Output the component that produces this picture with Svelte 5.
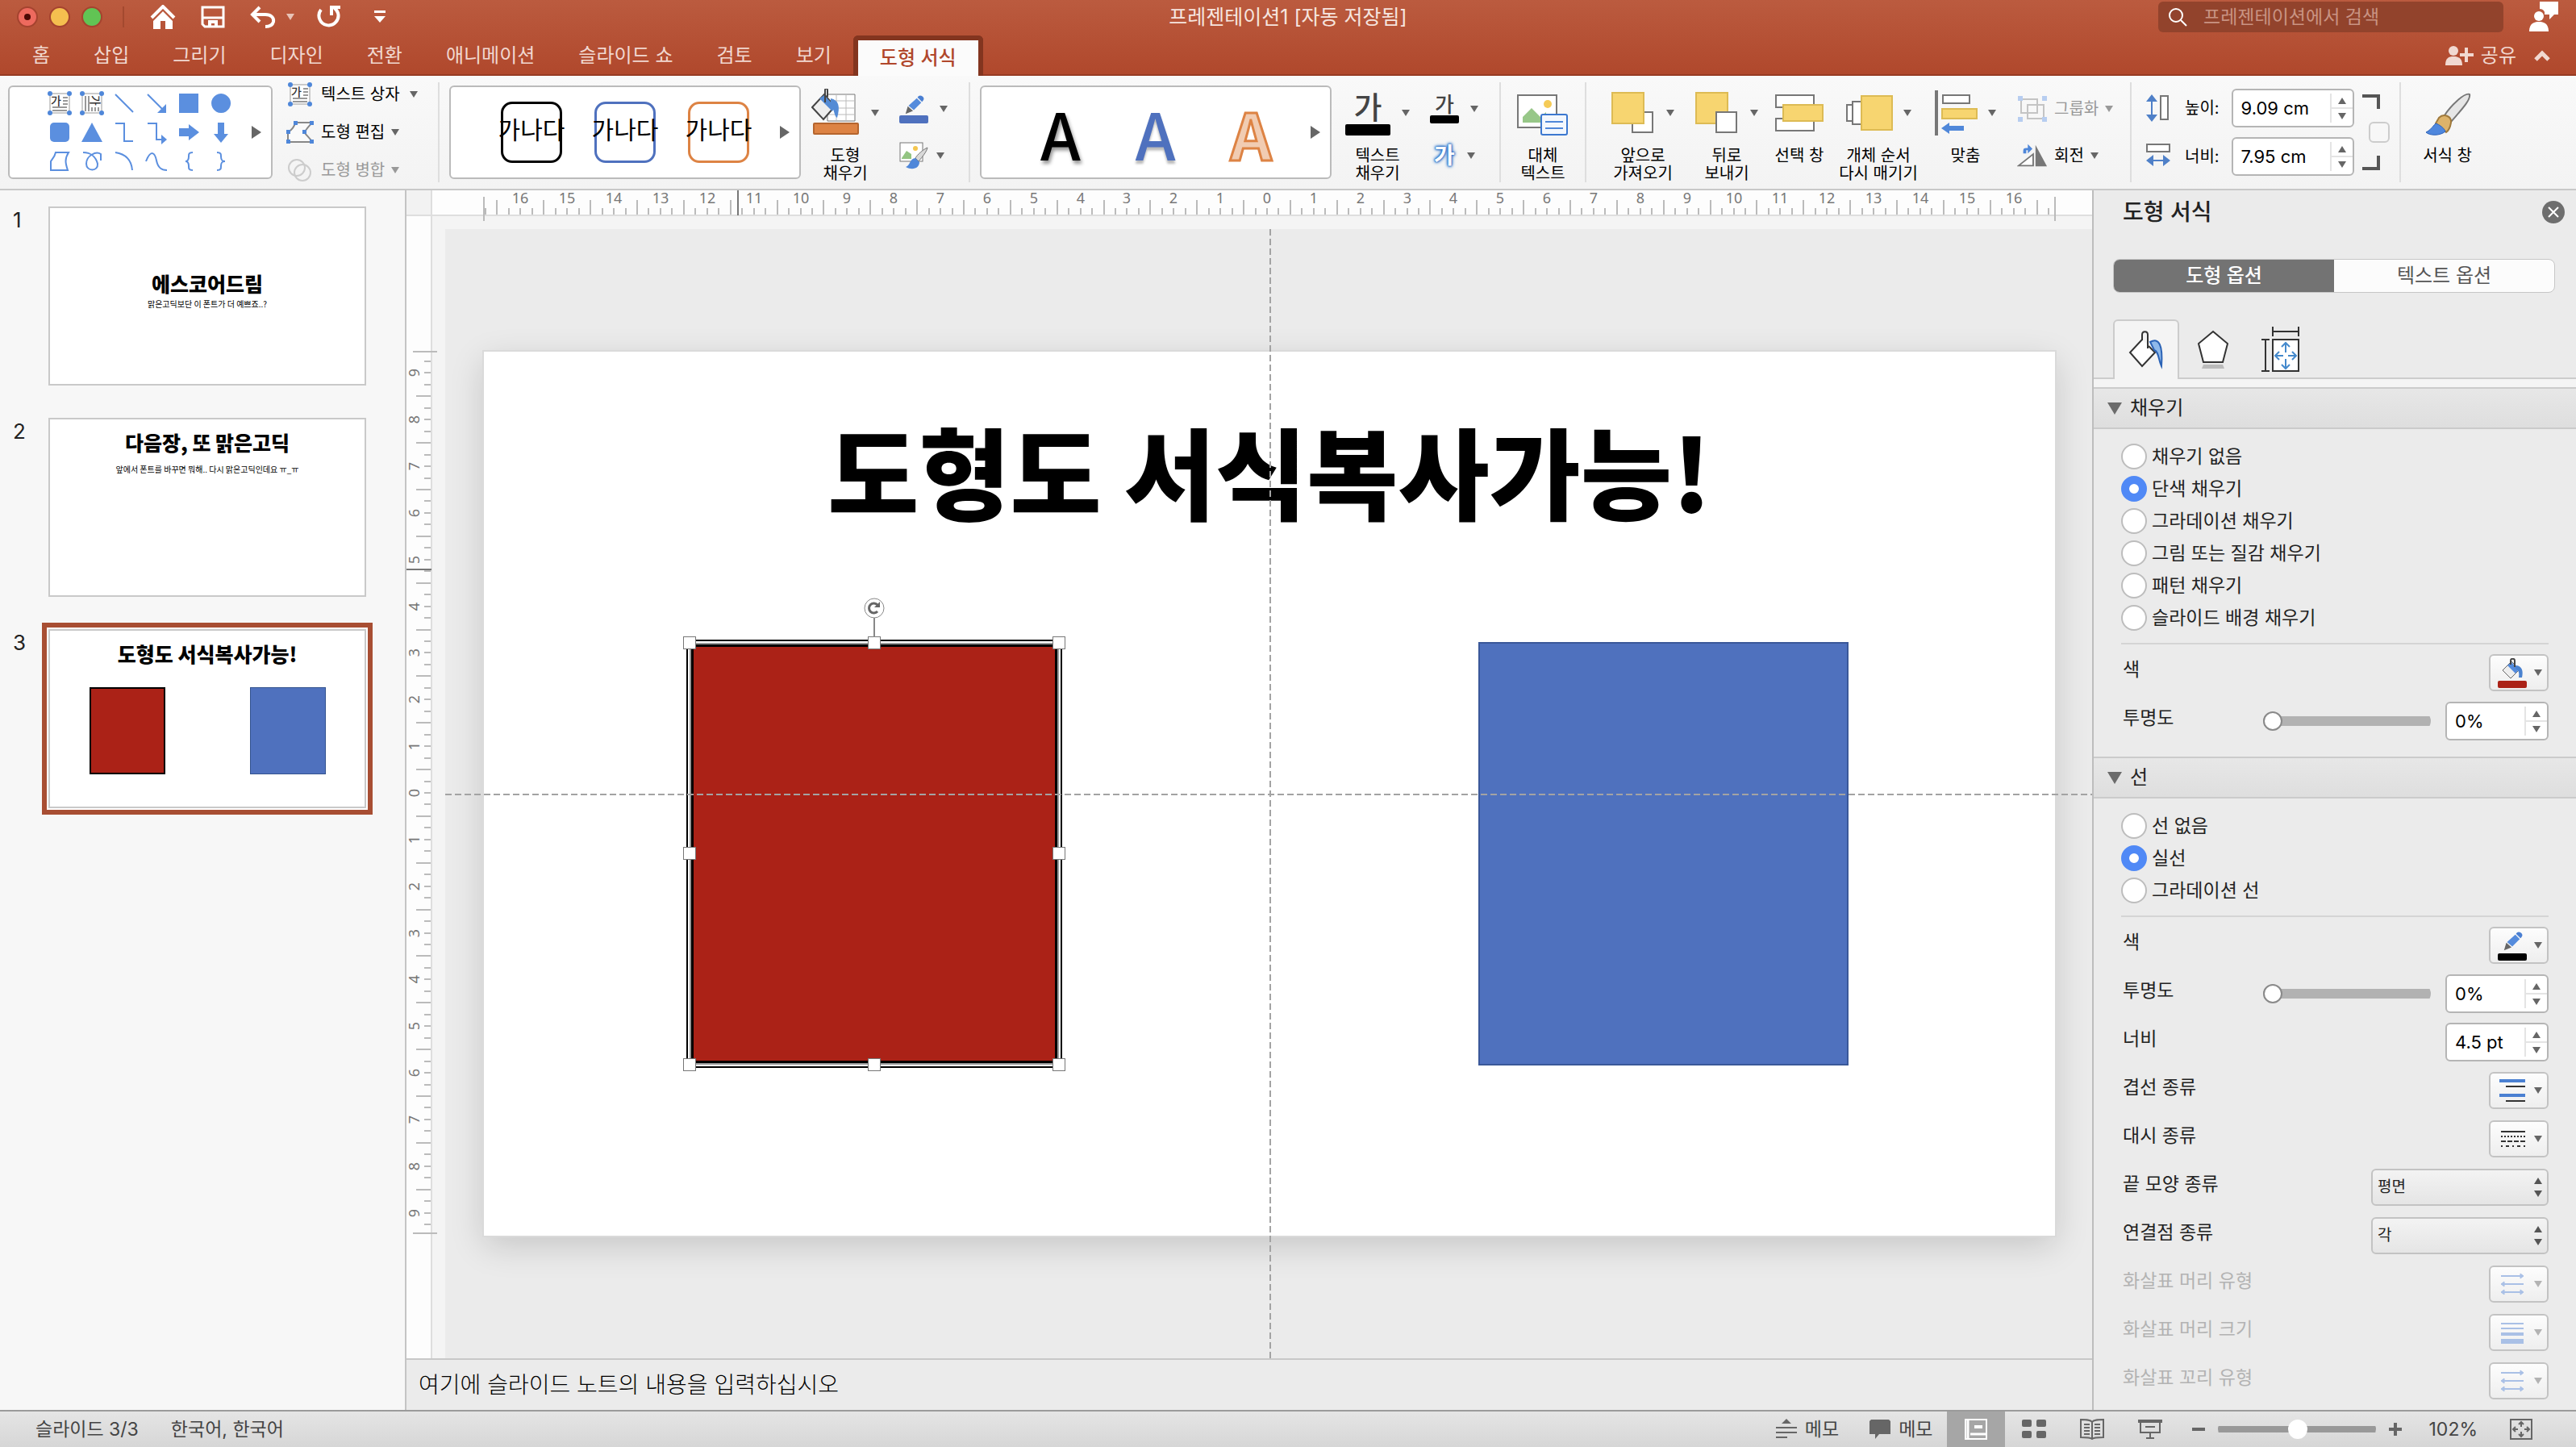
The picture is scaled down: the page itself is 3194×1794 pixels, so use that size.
<script>
    let fill = '단색 채우기';
    let line = '실선';
    let fillAlpha = 0;
    let lineAlpha = 0;
    let zoom = 51;

    const tabs = ['홈', '삽입', '그리기', '디자인', '전환', '애니메이션', '슬라이드 쇼', '검토', '보기', '도형 서식'];
    const fills = ['채우기 없음', '단색 채우기', '그라데이션 채우기', '그림 또는 질감 채우기', '패턴 채우기', '슬라이드 배경 채우기'];
    const lines = ['선 없음', '실선', '그라데이션 선'];

    // f: filled shape, s: stroked shape, both on a 30x30 box
    const shapes = [
        {name: '텍스트 상자', box: 'h'},
        {name: '세로 텍스트 상자', box: 'v'},
        {name: '선', s: 'M4 4L26 26'},
        {name: '화살표', s: 'M4 4L24 24', f: 'M27 27V16L16 27z'},
        {name: '직사각형', f: 'M3 3H27V27H3z'},
        {name: '타원', f: 'M15 3a12 12 0 1 0 .1 0z'},
        {name: '둥근 직사각형', f: 'M8 3H22a5 5 0 0 1 5 5V22a5 5 0 0 1-5 5H8a5 5 0 0 1-5-5V8a5 5 0 0 1 5-5z'},
        {name: '삼각형', f: 'M15 3L28 27H2z'},
        {name: '꺾인 연결선', s: 'M4 4H15V26H26'},
        {name: '꺾인 화살표', s: 'M4 4H15V24H23', f: 'M21 18L28 24L21 30z'},
        {name: '오른쪽 화살표', f: 'M3 10H15V5L28 15L15 25V20H3z'},
        {name: '아래쪽 화살표', f: 'M11 3H19V17H24L15 28L6 17H11z'},
        {name: '자유형', s: 'M10 4H26C21 12 22 17 25 26H4V15C6 12 9 9 10 4z'},
        {name: '자유 곡선', s: 'M4 4C14 4 20 10 22 18C23 28 8 28 8 18C8 8 20 2 26 6V14'},
        {name: '원호', s: 'M4 4C17 6 24 14 25 26'},
        {name: '곡선', s: 'M2 15C8 0 13 4 15 14C17 24 22 26 28 26'},
        {name: '왼쪽 중괄호', s: 'M20 4C15 4 15 6 15 9C15 13 14 15 11 15C14 15 15 17 15 21C15 24 15 26 20 26'},
        {name: '오른쪽 중괄호', s: 'M10 4C15 4 15 6 15 9C15 13 16 15 20 15C16 15 15 17 15 21C15 24 15 26 10 26'}
    ];

    // slide objects, in centimetres
    const page = {w: 33.87, h: 19.05};
    const objects = [
        {color: 'red', x: 4.44, y: 6.27, w: 7.95, h: 9.09, selected: true},
        {color: 'blue', x: 21.46, y: 6.27, w: 7.95, h: 9.09}
    ];
    const place = (o) =>
        `left: ${o.x / page.w * 100}%; top: ${o.y / page.h * 100}%; width: ${o.w / page.w * 100}%; height: ${o.h / page.h * 100}%`;

    const step = 57.85;
    const range = (n) => Array.from({length: 2 * n + 1}, (_, i) => i - n);
    const isHalf = (k) => Math.abs(k) % 4 === 2;
    const handles = ['nw', 'n', 'ne', 'w', 'e', 'sw', 's', 'se'];
</script>

{#snippet caret()}
    <svg class="caret" viewBox="0 0 10 8" width="10" height="8"><path d="M0 0H10L5 8z" fill="currentColor"/></svg>
{/snippet}

{#snippet more()}
    <button class="more" aria-label="더 보기">
        <svg viewBox="0 0 12 16" width="12" height="16"><path d="M0 0L12 8L0 16z" fill="#666"/></svg>
    </button>
{/snippet}

{#snippet textBox(dir)}
    <svg viewBox="0 0 30 30" width="30" height="30">
        <rect x="3" y="3" width="24" height="24" fill="#fff" stroke="#999"/>
        {#if dir === 'h'}
            <text x="4" y="17" font-size="14" font-weight="500" fill="#333">가</text>
            <path d="M19 8H25M19 12H25M19 16H25M6 20H24M6 24H24" stroke="#999" stroke-width="2"/>
        {:else}
            <text font-size="14" font-weight="500" fill="#333" transform="translate(14 5) rotate(90)">가</text>
            <path d="M7 6V25M11 6V25M15 20V25M19 20V25M23 20V25" stroke="#999" stroke-width="2"/>
        {/if}
        {#each [3, 27] as x}
            {#each [3, 27] as y}
                <circle cx={x} cy={y} r="3" fill="#4f87d9"/>
            {/each}
        {/each}
    </svg>
{/snippet}

{#snippet pen(size)}
    <svg viewBox="0 0 28 26" width={size} height={size}>
        <path d="M3 25L6 15L13 21z" fill="#666"/>
        <path d="M7 14L18 4L24 10L14 20z" fill="#548bdc"/>
        <path d="M19 3C21 0 23 0 26 2C28 4 28 6 25 9z" fill="#4a7fd2"/>
    </svg>
{/snippet}

{#snippet spin(value, label)}
    <span class="spin">
        <input type="text" aria-label={label} {value}>
        <span class="steps">
            <button aria-label="{label} 늘리기"><svg viewBox="0 0 10 8" width="10" height="8"><path d="M0 8H10L5 0z" fill="#666"/></svg></button>
            <button aria-label="{label} 줄이기"><svg viewBox="0 0 10 8" width="10" height="8"><path d="M0 0H10L5 8z" fill="#666"/></svg></button>
        </span>
    </span>
{/snippet}

{#snippet updown()}
    <svg class="updown" viewBox="0 0 10 24" width="10" height="24"><path d="M0 8H10L5 0zM0 16H10L5 24z" fill="#555"/></svg>
{/snippet}

{#snippet arrows()}
    <svg viewBox="0 0 36 30" width="36" height="30" stroke="#a9c0e6" fill="#a9c0e6" stroke-width="2">
        <path d="M4 5H28M8 15H32M8 25H28"/>
        <path d="M28 2L32 5L28 8zM8 12L4 15L8 18zM8 22L4 25L8 28zM28 22L32 25L28 28z" stroke-width="1"/>
    </svg>
{/snippet}

<div class="app">
    <header>
        <div class="titlebar">
            <div class="side">
                <div class="lights">
                    <button class="light close" aria-label="닫기"><i></i></button>
                    <button class="light min" aria-label="최소화"></button>
                    <button class="light max" aria-label="최대화"></button>
                </div>
                <div class="quick">
                    <button aria-label="홈">
                        <svg viewBox="0 0 32 30" width="32" height="30">
                            <path d="M2 16L16 2L30 16" fill="none" stroke="#fff" stroke-width="4"/>
                            <path d="M4 20L16 8L28 20V30H19V20H13V30H4z" fill="#fff"/>
                        </svg>
                    </button>
                    <button aria-label="저장">
                        <svg viewBox="0 0 30 28" width="30" height="28" fill="none" stroke="#fff">
                            <path d="M2 2H28V26H5L2 23z" stroke-width="3"/>
                            <path d="M3 15H27" stroke-width="3"/>
                            <path d="M9 18H21V27H17V22H13V27H9z" fill="#fff" stroke="none"/>
                        </svg>
                    </button>
                    <button class="undo" aria-label="실행 취소">
                        <svg viewBox="0 0 32 28" width="32" height="28" fill="none" stroke="#fff" stroke-width="4">
                            <path d="M12 2L3 11L12 20"/>
                            <path d="M4 11H19C26 11 30 15 29 20C28 24 24 26 19 26"/>
                        </svg>
                        {@render caret()}
                    </button>
                    <button class="redo" aria-label="다시 실행">
                        <svg viewBox="0 0 32 30" width="32" height="30" fill="none" stroke="#fff" stroke-width="4">
                            <path d="M6 6A12 12 0 1 0 27 10C26 7 24 5 22 3"/>
                            <path d="M19 13V3H30"/>
                        </svg>
                    </button>
                    <button class="custom" aria-label="사용자 지정">
                        <svg viewBox="0 0 16 16" width="16" height="16" fill="#fff"><path d="M1 0H15V3H1zM1 7H15L8 15z"/></svg>
                    </button>
                </div>
            </div>
            <h1>프레젠테이션1 [자동 저장됨]</h1>
            <div class="side right">
                <label class="search">
                    <svg viewBox="0 0 24 24" width="24" height="24" fill="none" stroke="#fff" stroke-width="2">
                        <circle cx="10" cy="10" r="8"/><path d="M16 16L23 23"/>
                    </svg>
                    <input type="text" aria-label="검색" placeholder="프레젠테이션에서 검색">
                </label>
                <button class="me" aria-label="계정">
                    <svg viewBox="0 0 36 38" width="36" height="38" fill="#fff">
                        <path d="M13 0H36V16H31L25 22V16H19C20 12 17 9 13 9z"/>
                        <circle cx="12" cy="18" r="6"/>
                        <path d="M0 37C0 27 6 25 12 25S24 27 24 37z"/>
                    </svg>
                </button>
            </div>
        </div>
        <nav>
            {#each tabs as tab, i}
                <button class="tab" class:on={i === tabs.length - 1}>{tab}</button>
            {/each}
            <button class="share">
                <svg viewBox="0 0 36 26" width="36" height="26" fill="#f1d8d0">
                    <circle cx="10" cy="7" r="6"/>
                    <path d="M0 25C0 16 4 14 10 14S21 16 21 25z"/>
                    <path d="M24 3H28V10H35V14H28V21H24V14H18V10H24z"/>
                </svg>
                공유
            </button>
            <button class="fold" aria-label="리본 접기">
                <svg viewBox="0 0 20 14" width="20" height="14" fill="none" stroke="#f1d8d0" stroke-width="5"><path d="M2 12L10 4L18 12"/></svg>
            </button>
        </nav>
    </header>

    <div class="ribbon">
        <div class="gallery first">
            <div class="shapes">
                {#each shapes as s}
                    <button aria-label={s.name}>
                        {#if s.box}
                            {@render textBox(s.box)}
                        {:else}
                            <svg viewBox="0 0 30 30" width="30" height="30">
                                {#if s.s}<path d={s.s} fill="none" stroke="#5b8fdf" stroke-width="2"/>{/if}
                                {#if s.f}<path d={s.f} fill="#5b8fdf"/>{/if}
                            </svg>
                        {/if}
                    </button>
                {/each}
            </div>
            {@render more()}
        </div>

        <div class="stack">
            <button>
                {@render textBox('h')}
                텍스트 상자 <span class="wide">{@render caret()}</span>
            </button>
            <button>
                <svg viewBox="0 0 36 30" width="36" height="30">
                    <path d="M12 3H33C28 9 24 12 24 16C27 20 31 23 33 27H3V15C8 12 11 8 12 3z" fill="#fafafa" stroke="#888" stroke-width="2"/>
                    <path d="M10 1h5v5h-5zM30 1h5v5h-5zM1 12h5v5h-5zM21 12h5v5h-5zM1 24h5v5h-5zM30 24h5v5h-5z" fill="#4f87d9"/>
                </svg>
                도형 편집 {@render caret()}
            </button>
            <button class="dim" disabled>
                <svg viewBox="0 0 36 30" width="36" height="30" fill="none" stroke="#ccc" stroke-width="2">
                    <circle cx="14" cy="12" r="10"/><circle cx="21" cy="18" r="10"/>
                </svg>
                도형 병합 {@render caret()}
            </button>
        </div>
        <span class="rule"></span>

        <div class="gallery">
            <div class="themes">
                <button class="black"><span>가나다</span></button>
                <button class="blue"><span>가나다</span></button>
                <button class="orange"><span>가나다</span></button>
            </div>
            {@render more()}
        </div>

        <button class="big fillbtn">
            <span class="icon">
                <svg viewBox="0 0 60 60" width="60" height="60">
                    <path d="M20 7H54V40H20z" fill="#fff" stroke="#777"/>
                    <path d="M31 7V40M43 7V40M20 15H54M20 24H54M20 32H54" stroke="#bbb"/>
                    <path d="M16 7L29 22L15 38L1 23z" fill="#eee" stroke="#444" stroke-width="2"/>
                    <path d="M10 12L26 28L29 22L16 8z" fill="#548bd5"/>
                    <path d="M24 12C34 14 36 22 32 36C28 34 29 26 24 20z" fill="#548bd5"/>
                    <path d="M17 17V2C17-1 20-1 20 2V10" fill="none" stroke="#444" stroke-width="2"/>
                    <rect x="3" y="43" width="55" height="13" rx="1" fill="#dd8344" stroke="#b5652e" stroke-width="2"/>
                </svg>
                {@render caret()}
            </span>
            도형<br>채우기
        </button>
        <div class="pair">
            <button class="ink">
                <span>{@render pen(26)}<i class="swatch blue"></i></span>
                {@render caret()}
            </button>
            <button>
                <svg viewBox="0 0 36 34" width="36" height="34">
                    <rect x="1" y="1" width="28" height="23" fill="#fff" stroke="#777"/>
                    <path d="M3 20L9 11L15 15V21H3z" fill="#93c482"/>
                    <circle cx="20" cy="8" r="3" fill="#f4c64f"/>
                    <path d="M35 7C30 9 22 16 20 20L24 24C29 18 34 12 35 7z" fill="#d9d9d9" stroke="#777"/>
                    <path d="M20 20C13 20 14 29 8 31C17 36 25 32 25 25z" fill="#4f87d9"/>
                </svg>
                {@render caret()}
            </button>
        </div>
        <span class="rule"></span>

        <div class="gallery">
            <div class="arts">
                <button class="a1">A</button>
                <button class="a2">A</button>
                <button class="a3">A</button>
            </div>
            {@render more()}
        </div>

        <button class="big textbtn">
            <span class="icon">
                <span class="glyph"><b>가</b><i></i></span>
                {@render caret()}
            </span>
            텍스트<br>채우기
        </button>
        <div class="pair second">
            <button class="ink">
                <span><b>가</b><i class="swatch"></i></span>
                {@render caret()}
            </button>
            <button><b class="glow">가</b>{@render caret()}</button>
        </div>
        <span class="rule"></span>

        <button class="big alt">
            <span class="icon">
                <svg viewBox="0 0 64 56" width="64" height="56">
                    <rect x="1" y="6" width="48" height="40" fill="#fff" stroke="#777" stroke-width="2"/>
                    <path d="M7 40V33L18 22L29 33L36 27V40z" fill="#97c788"/>
                    <circle cx="38" cy="17" r="5" fill="#f5cb57"/>
                    <rect x="30" y="30" width="32" height="25" rx="2" fill="#f3f7fd" stroke="#3c78d0" stroke-width="2"/>
                    <path d="M35 39H57M35 47H57" stroke="#4f87d9" stroke-width="2"/>
                </svg>
            </span>
            대체<br>텍스트
        </button>
        <span class="rule"></span>

        <button class="big front">
            <span class="icon">
                <svg viewBox="0 0 54 56" width="54" height="56">
                    <rect x="26" y="27" width="25" height="25" fill="#fff" stroke="#777" stroke-width="2"/>
                    <rect x="1" y="3" width="39" height="38" fill="#f7d570" stroke="#ddbb54" stroke-width="2"/>
                </svg>
                {@render caret()}
            </span>
            앞으로<br>가져오기
        </button>
        <button class="big back">
            <span class="icon">
                <svg viewBox="0 0 54 56" width="54" height="56">
                    <rect x="1" y="3" width="39" height="38" fill="#f7d570" stroke="#ddbb54" stroke-width="2"/>
                    <rect x="26" y="27" width="25" height="25" fill="#fff" stroke="#777" stroke-width="2"/>
                </svg>
                {@render caret()}
            </span>
            뒤로<br>보내기
        </button>
        <button class="big pane">
            <span class="icon">
                <svg viewBox="0 0 60 56" width="60" height="56">
                    <rect x="1" y="6" width="47" height="15" fill="#fff" stroke="#777" stroke-width="2"/>
                    <rect x="1" y="35" width="47" height="15" fill="#fff" stroke="#777" stroke-width="2"/>
                    <rect x="10" y="18" width="49" height="20" fill="#f7d570" stroke="#ddbb54" stroke-width="2"/>
                </svg>
            </span>
            선택 창
        </button>
        <button class="big order">
            <span class="icon">
                <svg viewBox="0 0 60 56" width="60" height="56">
                    <rect x="2" y="18" width="14" height="20" fill="#fff" stroke="#777" stroke-width="2"/>
                    <rect x="9" y="14" width="18" height="28" fill="#fff" stroke="#777" stroke-width="2"/>
                    <rect x="20" y="7" width="38" height="42" fill="#f7d570" stroke="#ddbb54" stroke-width="2"/>
                </svg>
                {@render caret()}
            </span>
            개체 순서<br>다시 매기기
        </button>
        <button class="big align">
            <span class="icon">
                <svg viewBox="0 0 54 56" width="54" height="56">
                    <path d="M0 0H4V56H0z" fill="#777"/>
                    <rect x="10" y="6" width="33" height="10" fill="#fff" stroke="#777" stroke-width="2"/>
                    <rect x="9" y="23" width="43" height="12" fill="#f7d570" stroke="#ddbb54" stroke-width="2"/>
                    <path d="M8 47L18 40V44H36V50H18V54z" fill="#4f87d9"/>
                </svg>
                {@render caret()}
            </span>
            맞춤
        </button>
        <div class="pair rows">
            <button class="dim" disabled>
                <svg viewBox="0 0 38 34" width="38" height="34">
                    <path d="M5 5H25V22H5zM13 12H33V29H13z" fill="none" stroke="#c4c4c4" stroke-width="2"/>
                    <path d="M1 1h6v6h-6zM31 1h6v6h-6zM1 27h6v6h-6zM31 27h6v6h-6z" fill="#b7cdf0"/>
                </svg>
                그룹화 {@render caret()}
            </button>
            <button>
                <svg viewBox="0 0 40 30" width="40" height="30">
                    <path d="M2 28H21V13z" fill="#fff" stroke="#777" stroke-width="2"/>
                    <path d="M24 1V29H39z" fill="#777"/>
                    <path d="M8 12V9C8 6 9 5 12 5H14V0L20 6L14 12V8H12V12z" fill="#4f87d9"/>
                </svg>
                회전 {@render caret()}
            </button>
        </div>
        <span class="rule"></span>

        <div class="sizes">
            <label>
                <svg viewBox="0 0 30 34" width="30" height="34">
                    <path d="M7 8V26" stroke="#4f80c8" stroke-width="2"/>
                    <path d="M7 0L14 9H0zM7 34L14 25H0z" fill="#4f80c8"/>
                    <rect x="18" y="2" width="9" height="29" fill="#fff" stroke="#777" stroke-width="2"/>
                </svg>
                높이:
                {@render spin('9.09 cm', '높이')}
            </label>
            <label>
                <svg viewBox="0 0 30 34" width="30" height="34">
                    <rect x="1" y="2" width="28" height="9" fill="#fff" stroke="#777" stroke-width="2"/>
                    <path d="M8 22H22" stroke="#4f80c8" stroke-width="2"/>
                    <path d="M0 22L9 15V29zM30 22L21 15V29z" fill="#4f80c8"/>
                </svg>
                너비:
                {@render spin('7.95 cm', '너비')}
            </label>
        </div>
        <div class="ratio">
            <svg viewBox="0 0 24 20" width="24" height="20"><path d="M0 2H20V18" fill="none" stroke="#555" stroke-width="4"/></svg>
            <input type="checkbox" aria-label="가로 세로 비율 고정">
            <svg viewBox="0 0 24 20" width="24" height="20"><path d="M0 18H20V2" fill="none" stroke="#555" stroke-width="4"/></svg>
        </div>
        <span class="rule"></span>

        <button class="big brush">
            <span class="icon">
                <svg viewBox="0 0 58 56" width="58" height="56">
                    <path d="M56 5C50 2 32 20 25 31L33 39C44 26 58 12 56 5z" fill="#e6e6e6" stroke="#777" stroke-width="2"/>
                    <path d="M18 34C24 28 34 32 33 40C32 46 30 50 27 52L14 41z" fill="#ddb36a" stroke="#a07a3c" stroke-width="2"/>
                    <path d="M2 52C8 49 10 45 14 41C18 42 25 47 26 51C19 57 6 56 2 52z" fill="#4f87dd" stroke="#2f63b8"/>
                </svg>
            </span>
            서식 창
        </button>
    </div>

    <main>
        <aside class="slides">
            <ol>
                <li>
                    <span class="num">1</span>
                    <button class="thumb">
                        <span class="page cover">
                            <b>에스코어드림</b>
                            <small>맑은고딕보단 이 폰트가 더 예쁘죠..?</small>
                        </span>
                    </button>
                </li>
                <li>
                    <span class="num">2</span>
                    <button class="thumb">
                        <span class="page">
                            <b>다음장, 또 맑은고딕</b>
                            <small class="low">앞에서 폰트를 바꾸면 뭐해.. 다시 맑은고딕인데요 ㅠ_ㅠ</small>
                        </span>
                    </button>
                </li>
                <li>
                    <span class="num">3</span>
                    <button class="thumb on">
                        <span class="page">
                            <b>도형도 서식복사가능!</b>
                            <span class="minis"><i class="red"></i><i class="blue"></i></span>
                        </span>
                    </button>
                </li>
            </ol>
        </aside>

        <section class="editor">
            <div class="corner"></div>
            <svg class="ruler top" height="32">
                <g transform="translate(1035 0)">
                    {#each range(67) as k}
                        <path d="M{Math.round(k * step / 4)} {isHalf(k) ? 12 : 22}V30" stroke="#bbb" stroke-width="2"/>
                    {/each}
                    {#each range(16) as n}
                        <text x={Math.round(n * step)} y="16">{Math.abs(n)}</text>
                    {/each}
                    <path d="M-971 8V38M977 8V38" stroke="#bbb" stroke-width="2"/>
                    <path d="M-656 0V31" stroke="#777" stroke-width="2"/>
                </g>
            </svg>
            <svg class="ruler left" width="32">
                <g transform="translate(0 715)">
                    {#each range(37) as k}
                        <path d="M{isHalf(k) ? 12 : 22} {Math.round(k * step / 4)}H30" stroke="#bbb" stroke-width="2"/>
                    {/each}
                    {#each range(9) as n}
                        <text transform="translate(16 {Math.round(n * step)}) rotate(-90)">{Math.abs(n)}</text>
                    {/each}
                    <path d="M8-547H38M8 546H38" stroke="#bbb" stroke-width="2"/>
                    <path d="M0-277H31" stroke="#777" stroke-width="2"/>
                </g>
            </svg>
            <div class="canvas">
                <div class="slide">
                    <h2>도형도 서식복사가능!</h2>
                    {#each objects as o}
                        <div class="shape {o.color}" style={place(o)}>
                            {#if o.selected}
                                {#each handles as h}
                                    <i class="handle {h}"></i>
                                {/each}
                                <svg class="turn" viewBox="0 0 28 50" width="28" height="50">
                                    <path d="M14 26V50" stroke="#888" stroke-width="2"/>
                                    <circle cx="14" cy="14" r="12" fill="#fff" stroke="#888"/>
                                    <path d="M18 18A6 6 0 1 1 18 10" fill="none" stroke="#666" stroke-width="3"/>
                                    <path d="M21 6V13H14z" fill="#666"/>
                                </svg>
                            {/if}
                        </div>
                    {/each}
                </div>
                <i class="guide across"></i>
                <i class="guide down"></i>
            </div>
            <p class="notes">여기에 슬라이드 노트의 내용을 입력하십시오</p>
        </section>

        <aside class="format">
            <div class="head">
                <h3>도형 서식</h3>
                <button aria-label="창 닫기">
                    <svg viewBox="0 0 28 28" width="28" height="28">
                        <circle cx="14" cy="14" r="14" fill="#6e6e6e"/>
                        <path d="M8 8L20 20M20 8L8 20" stroke="#fff" stroke-width="2"/>
                    </svg>
                </button>
            </div>
            <div class="segments">
                <button class="on">도형 옵션</button>
                <button>텍스트 옵션</button>
            </div>
            <div class="kinds">
                <button class="on" aria-label="채우기 및 선">
                    <svg viewBox="0 0 44 48" width="44" height="48">
                        <path d="M17 11L2 27L17 44L33 27L25 19" fill="#fff" stroke="#333" stroke-width="2"/>
                        <path d="M17 12V5C17 0 24 0 24 5V22" fill="none" stroke="#333" stroke-width="2"/>
                        <path d="M27 14C38 8 43 18 41 44C37 36 38 26 32 24z" fill="#8fb9ea" stroke="#2a62b5" stroke-width="2"/>
                    </svg>
                </button>
                <button aria-label="효과">
                    <svg viewBox="0 0 44 48" width="44" height="48">
                        <path d="M22 2L40 17L34 40H10L4 17z" fill="#fff" stroke="#333" stroke-width="2"/>
                        <path d="M10 43H34L36 48H8z" fill="#bbb"/>
                    </svg>
                </button>
                <button aria-label="크기 및 속성">
                    <svg viewBox="0 0 48 56" width="48" height="56" fill="none" stroke="#333" stroke-width="2">
                        <rect x="14" y="16" width="32" height="39" fill="#fff"/>
                        <path d="M14 0V12M46 0V12M14 6H46M0 16H10M0 55H10M5 16V55"/>
                        <path d="M30 32V20M25 25L30 20L35 25M30 40V52M25 47L30 52L35 47M27 36H17M22 31L17 36L22 41M33 36H43M38 31L43 36L38 41" stroke="#4489cc"/>
                    </svg>
                </button>
            </div>

            <button class="title">
                <svg viewBox="0 0 18 15" width="18" height="15"><path d="M0 0H18L9 15z" fill="#6b6b6b"/></svg>
                채우기
            </button>
            <div class="body">
                {#each fills as f}
                    <label class="radio"><input type="radio" name="fill" bind:group={fill} value={f}>{f}</label>
                {/each}
                <hr>
                <div class="row">
                    <span>색</span>
                    <button class="pick" aria-label="채우기 색">
                        <span class="chip">
                            <svg viewBox="0 0 36 26" width="36" height="26">
                                <path d="M17 4L27 14L16 25L6 15z" fill="#eee" stroke="#666"/>
                                <path d="M12 9L22 19L26 14L17 5z" fill="#548bdc"/>
                                <path d="M22 9C30 9 32 16 30 24H26C27 18 26 15 22 13z" fill="#4a82d0"/>
                                <path d="M16 8V3C16 0 21 0 21 3V11" fill="none" stroke="#444" stroke-width="2"/>
                            </svg>
                            <i class="red"></i>
                        </span>
                        {@render caret()}
                    </button>
                </div>
                <div class="row">
                    <label for="fill-alpha">투명도</label>
                    <input id="fill-alpha" type="range" bind:value={fillAlpha}>
                    {@render spin('0%', '투명도')}
                </div>
            </div>

            <button class="title">
                <svg viewBox="0 0 18 15" width="18" height="15"><path d="M0 0H18L9 15z" fill="#6b6b6b"/></svg>
                선
            </button>
            <div class="body">
                {#each lines as l}
                    <label class="radio"><input type="radio" name="line" bind:group={line} value={l}>{l}</label>
                {/each}
                <hr>
                <div class="row">
                    <span>색</span>
                    <button class="pick" aria-label="선 색">
                        <span class="chip">{@render pen(26)}<i></i></span>
                        {@render caret()}
                    </button>
                </div>
                <div class="row">
                    <label for="line-alpha">투명도</label>
                    <input id="line-alpha" type="range" bind:value={lineAlpha}>
                    {@render spin('0%', '투명도')}
                </div>
                <div class="row">
                    <span>너비</span>
                    {@render spin('4.5 pt', '너비')}
                </div>
                <div class="row">
                    <span>겹선 종류</span>
                    <button class="pick" aria-label="겹선 종류">
                        <svg viewBox="0 0 36 30" width="36" height="30">
                            <path d="M2 3H34M2 21H34" stroke="#4a80d2" stroke-width="4"/>
                            <path d="M10 10H34M10 28H34" stroke="#333" stroke-width="2"/>
                        </svg>
                        {@render caret()}
                    </button>
                </div>
                <div class="row">
                    <span>대시 종류</span>
                    <button class="pick" aria-label="대시 종류">
                        <svg viewBox="0 0 36 30" width="36" height="30" stroke="#333" stroke-width="2">
                            <path d="M4 6H34"/>
                            <path d="M4 12H34" stroke-dasharray="2 2"/>
                            <path d="M4 18H34" stroke-dasharray="6 2"/>
                            <path d="M4 24H34" stroke-dasharray="2 4 4 4"/>
                        </svg>
                        {@render caret()}
                    </button>
                </div>
                <div class="row">
                    <label for="cap">끝 모양 종류</label>
                    <span class="drop">
                        <select id="cap"><option>평면</option></select>
                        {@render updown()}
                    </span>
                </div>
                <div class="row">
                    <label for="join">연결점 종류</label>
                    <span class="drop">
                        <select id="join"><option>각</option></select>
                        {@render updown()}
                    </span>
                </div>
                <div class="row off">
                    <span>화살표 머리 유형</span>
                    <button class="pick" aria-label="화살표 머리 유형" disabled>{@render arrows()}{@render caret()}</button>
                </div>
                <div class="row off">
                    <span>화살표 머리 크기</span>
                    <button class="pick" aria-label="화살표 머리 크기" disabled>
                        <svg viewBox="0 0 36 30" width="36" height="30" fill="#a9c0e6">
                            <path d="M4 3H32V5H4zM4 9H32V11H4zM4 15H32V19H4zM4 23H32V29H4z"/>
                        </svg>
                        {@render caret()}
                    </button>
                </div>
                <div class="row off">
                    <span>화살표 꼬리 유형</span>
                    <button class="pick" aria-label="화살표 꼬리 유형" disabled>{@render arrows()}{@render caret()}</button>
                </div>
            </div>
        </aside>
    </main>

    <footer>
        <span class="count">슬라이드 3/3</span>
        <span>한국어, 한국어</span>
        <button class="memo">
            <svg viewBox="0 0 26 26" width="26" height="26" fill="#666"><path d="M7 6L13 0L19 6zM0 10H26V12H0zM0 16H26V18H0zM0 22H14V24H0z"/></svg>
            메모
        </button>
        <button class="memo">
            <svg viewBox="0 0 26 26" width="26" height="26" fill="#666"><path d="M2 1H24L26 3V19H12L7 25V19H0V3z"/></svg>
            메모
        </button>
        <div class="views">
            <button class="on" aria-label="기본">
                <svg viewBox="0 0 28 26" width="28" height="26" fill="none" stroke="#fff" stroke-width="2">
                    <rect x="1" y="1" width="26" height="24"/><path d="M4 1V25M7 19H27" stroke-width="3"/><path d="M12 10H22" stroke-width="4"/>
                </svg>
            </button>
            <button aria-label="여러 슬라이드">
                <svg viewBox="0 0 30 24" width="30" height="24" fill="#666">
                    <rect width="12" height="9" rx="2"/><rect x="18" width="12" height="9" rx="2"/><rect y="14" width="12" height="9" rx="2"/><rect x="18" y="14" width="12" height="9" rx="2"/>
                </svg>
            </button>
            <button aria-label="읽기용 보기">
                <svg viewBox="0 0 30 26" width="30" height="26" fill="none" stroke="#666" stroke-width="2">
                    <path d="M15 4C13 1 8 1 1 1V23C8 23 13 23 15 25C17 23 22 23 29 23V1C22 1 17 1 15 4V25"/>
                    <path d="M5 7H12M5 11H12M5 15H12M5 19H12M18 7H25M18 11H25M18 15H25M18 19H25"/>
                </svg>
            </button>
            <button aria-label="슬라이드 쇼">
                <svg viewBox="0 0 30 26" width="30" height="26" fill="none" stroke="#666">
                    <path d="M0 3H30" stroke-width="4"/><path d="M3 4V17H27V4M9 10H21M15 17V24M10 24H20" stroke-width="2"/>
                </svg>
            </button>
        </div>
        <div class="zoom">
            <button aria-label="축소"><svg viewBox="0 0 16 16" width="16" height="16"><path d="M0 8H16" stroke="#666" stroke-width="4"/></svg></button>
            <input type="range" aria-label="확대/축소" bind:value={zoom}>
            <button aria-label="확대"><svg viewBox="0 0 16 16" width="16" height="16"><path d="M0 8H16M8 0V16" stroke="#666" stroke-width="4"/></svg></button>
        </div>
        <span class="percent">102%</span>
        <button aria-label="창에 맞춤">
            <svg viewBox="0 0 28 26" width="28" height="26" fill="none" stroke="#666" stroke-width="2">
                <rect x="1" y="1" width="26" height="24"/>
                <path d="M14 4V10M11 7L14 4L17 7M14 22V16M11 19L14 22L17 19M4 13H10M7 10L4 13L7 16M24 13H18M21 10L24 13L21 16"/>
            </svg>
        </button>
    </footer>
</div>

<style>
    :global(body) {
        margin: 0;
    }

    .app {
        height: 100vh;
        display: flex;
        flex-direction: column;
        overflow: hidden;
        background: #ebebeb;
        color: #222;
        font: 24px/32px Inter, "Noto Sans CJK KR", sans-serif;
    }

    .app * {
        box-sizing: border-box;
    }

    button {
        display: flex;
        align-items: center;
        padding: 0;
        border: 0;
        background: none;
        color: inherit;
        font: inherit;
    }

    svg {
        display: block;
        flex: none;
    }

    h1, h2, h3, p, ol {
        margin: 0;
        padding: 0;
        font-weight: 400;
    }

    .caret {
        color: #666;
    }

    /* title bar and tabs */
    header {
        display: flex;
        flex-direction: column;
        height: 94px;
        border-bottom: 2px solid #963b23;
        background: linear-gradient(#bb5b3f, #b0482c);
        color: #f1d8d0;
    }

    .titlebar {
        display: flex;
        height: 42px;
    }

    .side {
        flex: 1;
        display: flex;
        align-items: center;
    }

    .right {
        justify-content: flex-end;
    }

    h1 {
        font-size: 25px;
        line-height: 42px;
        color: #f6e5df;
    }

    .lights {
        display: flex;
        gap: 14px;
        padding: 0 25px 0 21px;
        border-right: 2px solid #a3492f;
    }

    .light {
        justify-content: center;
        width: 26px;
        height: 26px;
        border: 2px solid #a5432f;
        border-radius: 50%;
    }

    .light i {
        width: 8px;
        height: 8px;
        border-radius: 50%;
        background: #4b0a05;
    }

    .close {
        background: #ed6a5e;
    }

    .min {
        background: #f5bf4f;
    }

    .max {
        background: #61c454;
    }

    .quick {
        display: flex;
        align-items: center;
        gap: 31px;
        padding-left: 32px;
    }

    .undo {
        gap: 13px;
    }

    .quick .caret {
        color: #e8c3b7;
    }

    .redo {
        margin-left: -4px;
    }

    .custom {
        padding-left: 8px;
    }

    .search {
        display: flex;
        align-items: center;
        gap: 20px;
        width: 428px;
        height: 38px;
        padding-left: 12px;
        border-radius: 6px;
        background: #92432c;
    }

    .search input {
        flex: 1;
        min-width: 0;
        padding: 0;
        border: 0;
        background: none;
        font: inherit;
        font-size: 23px;
    }

    .search input::placeholder {
        color: #c99383;
        opacity: 1;
    }

    .me {
        margin: 0 22px 0 32px;
    }

    nav {
        flex: 1;
        display: flex;
        align-items: stretch;
        padding: 2px 32px 0 13px;
        margin-bottom: -2px;
    }

    .tab {
        padding: 0 27px;
    }

    .tab.on {
        border: 6px solid #83351f;
        border-bottom: 0;
        border-radius: 6px 6px 0 0;
        background: #fbfbfb;
        color: #b0472c;
        font-weight: 500;
    }

    .share {
        gap: 8px;
        margin-left: auto;
    }

    .fold {
        padding-left: 22px;
    }

    /* ribbon */
    .ribbon {
        display: flex;
        height: 142px;
        padding-left: 10px;
        border-bottom: 2px solid #c8c8c8;
        background: linear-gradient(#f9f9f9, #f3f3f3);
        color: #000;
        font-size: 20px;
        line-height: 22px;
        white-space: nowrap;
    }

    .rule {
        width: 2px;
        margin: 8px 12px;
        background: #dedede;
    }

    .gallery {
        display: flex;
        align-items: center;
        justify-content: space-between;
        width: 436px;
        margin: 12px 0;
        padding-right: 12px;
        border: 2px solid #bbb;
        border-radius: 6px;
        background: #fff;
    }

    .first {
        width: 328px;
    }

    .shapes {
        display: grid;
        grid-template-columns: repeat(6, 40px);
        grid-auto-rows: 36px;
        padding-left: 42px;
    }

    .shapes button {
        justify-content: center;
    }

    .stack {
        display: flex;
        flex-direction: column;
        justify-content: space-around;
        width: 177px;
        margin-left: 16px;
    }

    .stack button {
        gap: 8px;
        height: 40px;
    }

    .stack svg:first-child {
        width: 36px;
    }

    .stack .wide .caret {
        width: 10px;
        margin-left: 4px;
    }

    .dim, .dim .caret {
        color: #999;
    }

    .themes {
        display: flex;
        gap: 40px;
        padding-left: 62px;
    }

    .themes button {
        justify-content: center;
        width: 76px;
        height: 76px;
        padding-bottom: 6px;
        border: 3px solid #000;
        border-radius: 14px;
        font-size: 30px;
    }

    .themes span {
        flex: none;
    }

    .themes .blue {
        border-color: #4f71be;
    }

    .themes .orange {
        border-color: #dd8344;
    }

    .big {
        flex-direction: column;
        flex: none;
        padding-top: 18px;
    }

    .icon {
        display: flex;
        align-items: center;
        gap: 14px;
        height: 56px;
        margin-bottom: 14px;
    }

    .fillbtn {
        width: 82px;
        margin-left: 14px;
    }

    .textbtn {
        width: 82px;
        margin-left: 16px;
    }

    .glyph {
        display: flex;
        flex-direction: column;
        align-items: center;
    }

    .glyph b {
        font-size: 38px;
        line-height: 42px;
        font-weight: 500;
        color: #444;
    }

    .glyph i {
        width: 56px;
        height: 14px;
        border-radius: 2px;
        background: #000;
    }

    .pair {
        display: flex;
        flex-direction: column;
        justify-content: center;
        gap: 20px;
        width: 74px;
        margin-left: 26px;
    }

    .second {
        margin-left: 24px;
    }

    .pair button {
        gap: 10px;
        height: 38px;
    }

    .ink span {
        display: flex;
        flex-direction: column;
        align-items: center;
        width: 36px;
    }

    .ink b {
        font-size: 26px;
        line-height: 26px;
        font-weight: 500;
        color: #444;
    }

    .pair .ink {
        gap: 14px;
    }

    .swatch {
        width: 36px;
        height: 10px;
        border-radius: 2px;
        background: #000;
    }

    .swatch.blue {
        background: #4f71be;
    }

    .glow {
        width: 36px;
        font-size: 28px;
        text-align: center;
        color: #fff;
        text-shadow: 0 0 2px #2f72c8, 0 0 2px #2f72c8, 0 0 3px #2f72c8, 0 0 4px #3f80d0, 0 0 5px #3f80d0;
    }

    .arts {
        display: flex;
        gap: 68px;
        padding-left: 73px;
        font: 500 80px/112px "Noto Sans CJK KR", sans-serif;
    }

    .a1 {
        color: #000;
        text-shadow: 2px 4px 4px #999;
    }

    .a2 {
        color: #4f71be;
        text-shadow: 0 4px 3px #bbb;
    }

    .a3 {
        color: #f1ccb2;
        font-weight: 700;
        -webkit-text-stroke: 3px #dd8344;
    }

    .alt {
        width: 64px;
        margin: 0 8px;
    }

    .front {
        width: 80px;
        margin-left: 18px;
    }

    .back {
        width: 80px;
        margin-left: 24px;
    }

    .pane {
        width: 60px;
        margin-left: 20px;
    }

    .order {
        width: 100px;
        margin-left: 18px;
    }

    .order .icon {
        gap: 12px;
    }

    .align {
        width: 76px;
        margin-left: 20px;
    }

    .align .icon {
        gap: 12px;
    }

    .rows {
        width: 128px;
    }

    .rows svg:first-child {
        width: 38px;
    }

    .rows button {
        gap: 8px;
    }

    .sizes {
        display: flex;
        flex-direction: column;
        justify-content: center;
        gap: 12px;
        margin-left: 6px;
    }

    .sizes label {
        display: flex;
        align-items: center;
    }

    .sizes svg {
        margin-right: 18px;
    }

    .sizes .spin {
        width: 152px;
        margin-left: 15px;
    }

    .spin {
        display: flex;
        width: 128px;
        height: 48px;
        border: 2px solid #b5b5b5;
        border-radius: 6px;
        background: #fff;
    }

    .spin input {
        flex: 1;
        min-width: 0;
        padding: 0 0 0 10px;
        border: 0;
        background: none;
        color: #000;
        font: inherit;
        font-size: 22px;
        outline: 0;
    }

    .steps {
        display: flex;
        flex-direction: column;
        width: 28px;
        margin: 4px 0;
        border-left: 2px solid #e4e4e4;
    }

    .steps button {
        flex: 1;
        justify-content: center;
    }

    .steps button + button {
        border-top: 2px solid #e4e4e4;
    }

    .steps svg {
        margin: 0;
    }

    .ratio {
        display: flex;
        flex-direction: column;
        align-items: center;
        justify-content: center;
        gap: 14px;
        width: 44px;
    }

    .ratio input {
        appearance: none;
        align-self: flex-end;
        width: 26px;
        height: 26px;
        margin: 0;
        border: 2px solid #ccc;
        border-radius: 6px;
        background: #f7f7f7;
    }

    .brush {
        width: 76px;
        margin-left: 8px;
    }

    /* work area */
    main {
        flex: 1;
        display: flex;
        min-height: 0;
    }

    .slides {
        width: 504px;
        padding-top: 12px;
        border-right: 2px solid #c4c4c4;
        background: #f7f7f7;
    }

    ol {
        display: flex;
        flex-direction: column;
        gap: 24px;
        list-style: none;
    }

    li {
        display: flex;
    }

    .num {
        width: 52px;
        padding: 9px 0 0 16px;
        font-size: 26px;
    }

    .thumb {
        width: 410px;
        height: 238px;
        padding: 2px;
        border: 6px solid transparent;
        border-radius: 0;
    }

    .thumb.on {
        border-color: #a84e33;
        background: #fff;
    }

    .page {
        display: flex;
        flex-direction: column;
        align-items: center;
        width: 100%;
        height: 100%;
        padding-top: 12px;
        border: 2px solid #c9c9c9;
        background: #fff;
        color: #000;
        font-family: "Noto Sans CJK KR", sans-serif;
    }

    .cover {
        padding-top: 77px;
    }

    .page b {
        font-size: 25px;
        font-weight: 900;
    }

    .page small {
        font-size: 10px;
        line-height: 20px;
    }

    .page .low {
        padding-top: 8px;
    }

    .minis {
        display: flex;
        gap: 105px;
        margin-top: 26px;
    }

    .minis i {
        width: 94px;
        height: 108px;
        border: 2px solid #000;
        background: #ab2217;
    }

    .minis .blue {
        border: 1px solid #34538f;
        background: #4f71be;
    }

    .editor {
        flex: 1;
        min-width: 0;
        display: grid;
        grid-template: 32px 1fr 64px / 32px 1fr;
    }

    .corner {
        background: #f2f2f2;
        border: solid #dedede;
        border-width: 0 2px 2px 0;
    }

    .ruler {
        z-index: 1;
        overflow: visible;
        background: #fdfdfd;
        fill: #777;
        font: 18px "Noto Sans", sans-serif;
        text-anchor: middle;
    }

    .top {
        width: 100%;
        border-bottom: 2px solid #dedede;
    }

    .left {
        height: 100%;
        border-right: 2px solid #dedede;
    }

    .canvas {
        position: relative;
        display: flex;
        align-items: center;
        justify-content: center;
        overflow: hidden;
        padding-left: 2px;
        border: solid #f4f4f4;
        border-width: 16px 0 0 16px;
    }

    .slide {
        position: relative;
        width: calc(100% - 92px);
        aspect-ratio: 1948 / 1096;
        padding-top: 75px;
        background: #fff;
        box-shadow: 0 0 0 2px #dadada, 0 12px 40px rgba(0, 0, 0, .16);
    }

    h2 {
        text-align: center;
        color: #000;
        font: 900 123px/140px "Noto Sans CJK KR", sans-serif;
    }

    .shape {
        position: absolute;
    }

    .shape.red {
        background: #ab2217;
        box-shadow: inset 0 0 0 2px #999, inset 0 0 0 5px #000, 0 0 0 2px #fff, 0 0 0 4px #000;
    }

    .shape.blue {
        background: #4f71be;
        box-shadow: inset 0 0 0 1px #3a5899, 0 0 0 1px #3a5899;
    }

    .handle {
        position: absolute;
        left: calc(50% - 8px);
        top: calc(50% - 8px);
        width: 16px;
        height: 16px;
        border: 1px solid #777;
        background: #fff;
    }

    .nw, .w, .sw {
        left: -8px;
    }

    .ne, .e, .se {
        left: calc(100% - 8px);
    }

    .nw, .n, .ne {
        top: -8px;
    }

    .sw, .s, .se {
        top: calc(100% - 8px);
    }

    .turn {
        position: absolute;
        left: calc(50% - 14px);
        top: -57px;
    }

    .guide {
        position: absolute;
    }

    .across {
        left: 0;
        right: 0;
        top: 50%;
        height: 2px;
        background: repeating-linear-gradient(90deg, #a3a3a3 0 8px, transparent 8px 12px);
    }

    .down {
        top: 0;
        bottom: 0;
        left: calc(50% + 1px);
        width: 2px;
        background: repeating-linear-gradient(#a3a3a3 0 8px, transparent 8px 12px);
    }

    .notes {
        grid-column: 1 / 3;
        padding-left: 15px;
        border-top: 2px solid #c8c8c8;
        background: #ebebeb;
        color: #000;
        font-size: 28px;
        font-weight: 300;
        line-height: 62px;
    }

    /* format pane */
    .format {
        width: 600px;
        border-left: 2px solid #bdbdbd;
        overflow: hidden;
    }

    .head {
        display: flex;
        align-items: center;
        justify-content: space-between;
        height: 54px;
        padding: 0 14px 0 36px;
    }

    h3 {
        font-size: 28px;
        font-weight: 500;
    }

    .segments {
        display: flex;
        height: 42px;
        margin: 31px 26px 33px 24px;
        border: 1px solid #c6c6c6;
        border-radius: 8px;
        background: #fcfcfc;
        color: #555;
        overflow: hidden;
    }

    .segments button {
        flex: 1;
        justify-content: center;
    }

    .segments .on {
        background: #737373;
        color: #fff;
        font-weight: 500;
    }

    .kinds {
        display: flex;
        height: 84px;
        padding-left: 24px;
        border-bottom: 10px solid #f4f4f4;
        background: linear-gradient(#ccc, #ccc) bottom / 100% 2px no-repeat;
    }

    .kinds button {
        justify-content: center;
        width: 82px;
    }

    .kinds button + button {
        width: 84px;
    }

    .kinds .on {
        border: 2px solid #ccc;
        border-bottom: 0;
        border-radius: 6px 6px 0 0;
        background: #f4f4f4;
    }

    .title {
        gap: 10px;
        width: 100%;
        height: 52px;
        padding-left: 17px;
        border: solid #cbcbcb;
        border-width: 2px 0;
        background: linear-gradient(#e7e7e7, #dedede);
    }

    .body {
        padding: 14px 34px;
        font-size: 23px;
    }

    .radio {
        display: flex;
        align-items: center;
        gap: 6px;
        height: 40px;
    }

    .radio input {
        appearance: none;
        width: 32px;
        height: 32px;
        margin: 0;
        border: 2px solid #bdbdbd;
        border-radius: 50%;
        background: #fff;
    }

    .radio input:checked {
        border: 10px solid #5089f6;
    }

    hr {
        height: 2px;
        margin: 11px 0 5px;
        border: 0;
        background: #d4d4d4;
    }

    .row {
        display: flex;
        align-items: center;
        justify-content: space-between;
        height: 60px;
        padding-left: 2px;
    }

    .row > :first-child {
        flex: 1;
        padding-bottom: 8px;
    }

    .off {
        color: #b3b3b3;
    }

    .off .caret {
        color: #b3b3b3;
    }

    .row input[type="range"] {
        width: 208px;
        margin-right: 18px;
    }

    .pick {
        justify-content: space-between;
        width: 74px;
        height: 46px;
        padding: 0 6px 0 9px;
        border: 2px solid #c3c3c3;
        border-radius: 6px;
        background: linear-gradient(#fdfdfd, #eee);
    }

    .chip {
        display: flex;
        flex-direction: column;
        align-items: center;
        gap: 2px;
    }

    .chip i {
        width: 36px;
        height: 9px;
        border-radius: 2px;
        background: #000;
    }

    .chip .red {
        background: #ab2217;
    }

    .drop {
        position: relative;
        width: 220px;
    }

    select {
        appearance: none;
        display: block;
        width: 100%;
        height: 46px;
        padding: 0 6px;
        border: 2px solid #c3c3c3;
        border-radius: 6px;
        background: linear-gradient(#f3f3f3, #e5e5e5);
        color: #222;
        font: inherit;
        font-size: 19px;
    }

    .updown {
        position: absolute;
        right: 8px;
        top: 11px;
        pointer-events: none;
    }

    input[type="range"] {
        appearance: none;
        height: 24px;
        margin: 0;
        background: linear-gradient(#b2b2b2, #b2b2b2) center / 100% 12px no-repeat;
        border-radius: 12px;
    }

    input[type="range"]::-webkit-slider-runnable-track {
        height: 24px;
    }

    input[type="range"]::-webkit-slider-thumb {
        appearance: none;
        width: 24px;
        height: 24px;
        border: 2px solid #8a8a8a;
        border-radius: 50%;
        background: #fff;
    }

    /* status bar */
    footer {
        display: flex;
        align-items: center;
        height: 46px;
        padding: 0 54px 0 44px;
        border-top: 2px solid #9b9b9b;
        background: linear-gradient(#e5e5e5, #d6d6d6);
        color: #444;
        font-size: 23px;
    }

    .count {
        margin-right: 40px;
    }

    .memo {
        gap: 10px;
        margin-right: 38px;
    }

    .count + span {
        margin-right: auto;
    }

    .memo + .memo {
        margin-right: 17px;
    }

    .views {
        display: flex;
        align-self: stretch;
    }

    .views button {
        justify-content: center;
        width: 72px;
    }

    .views .on {
        background: #a6a6a6;
    }

    .zoom {
        display: flex;
        align-items: center;
        gap: 16px;
        margin: 0 34px 0 16px;
    }

    .zoom input[type="range"] {
        width: 196px;
        background: linear-gradient(#999, #999) center / 100% 8px no-repeat;
    }

    .zoom input[type="range"]::-webkit-slider-thumb {
        border-color: #fff;
    }

    .percent {
        margin-right: 40px;
    }
</style>
